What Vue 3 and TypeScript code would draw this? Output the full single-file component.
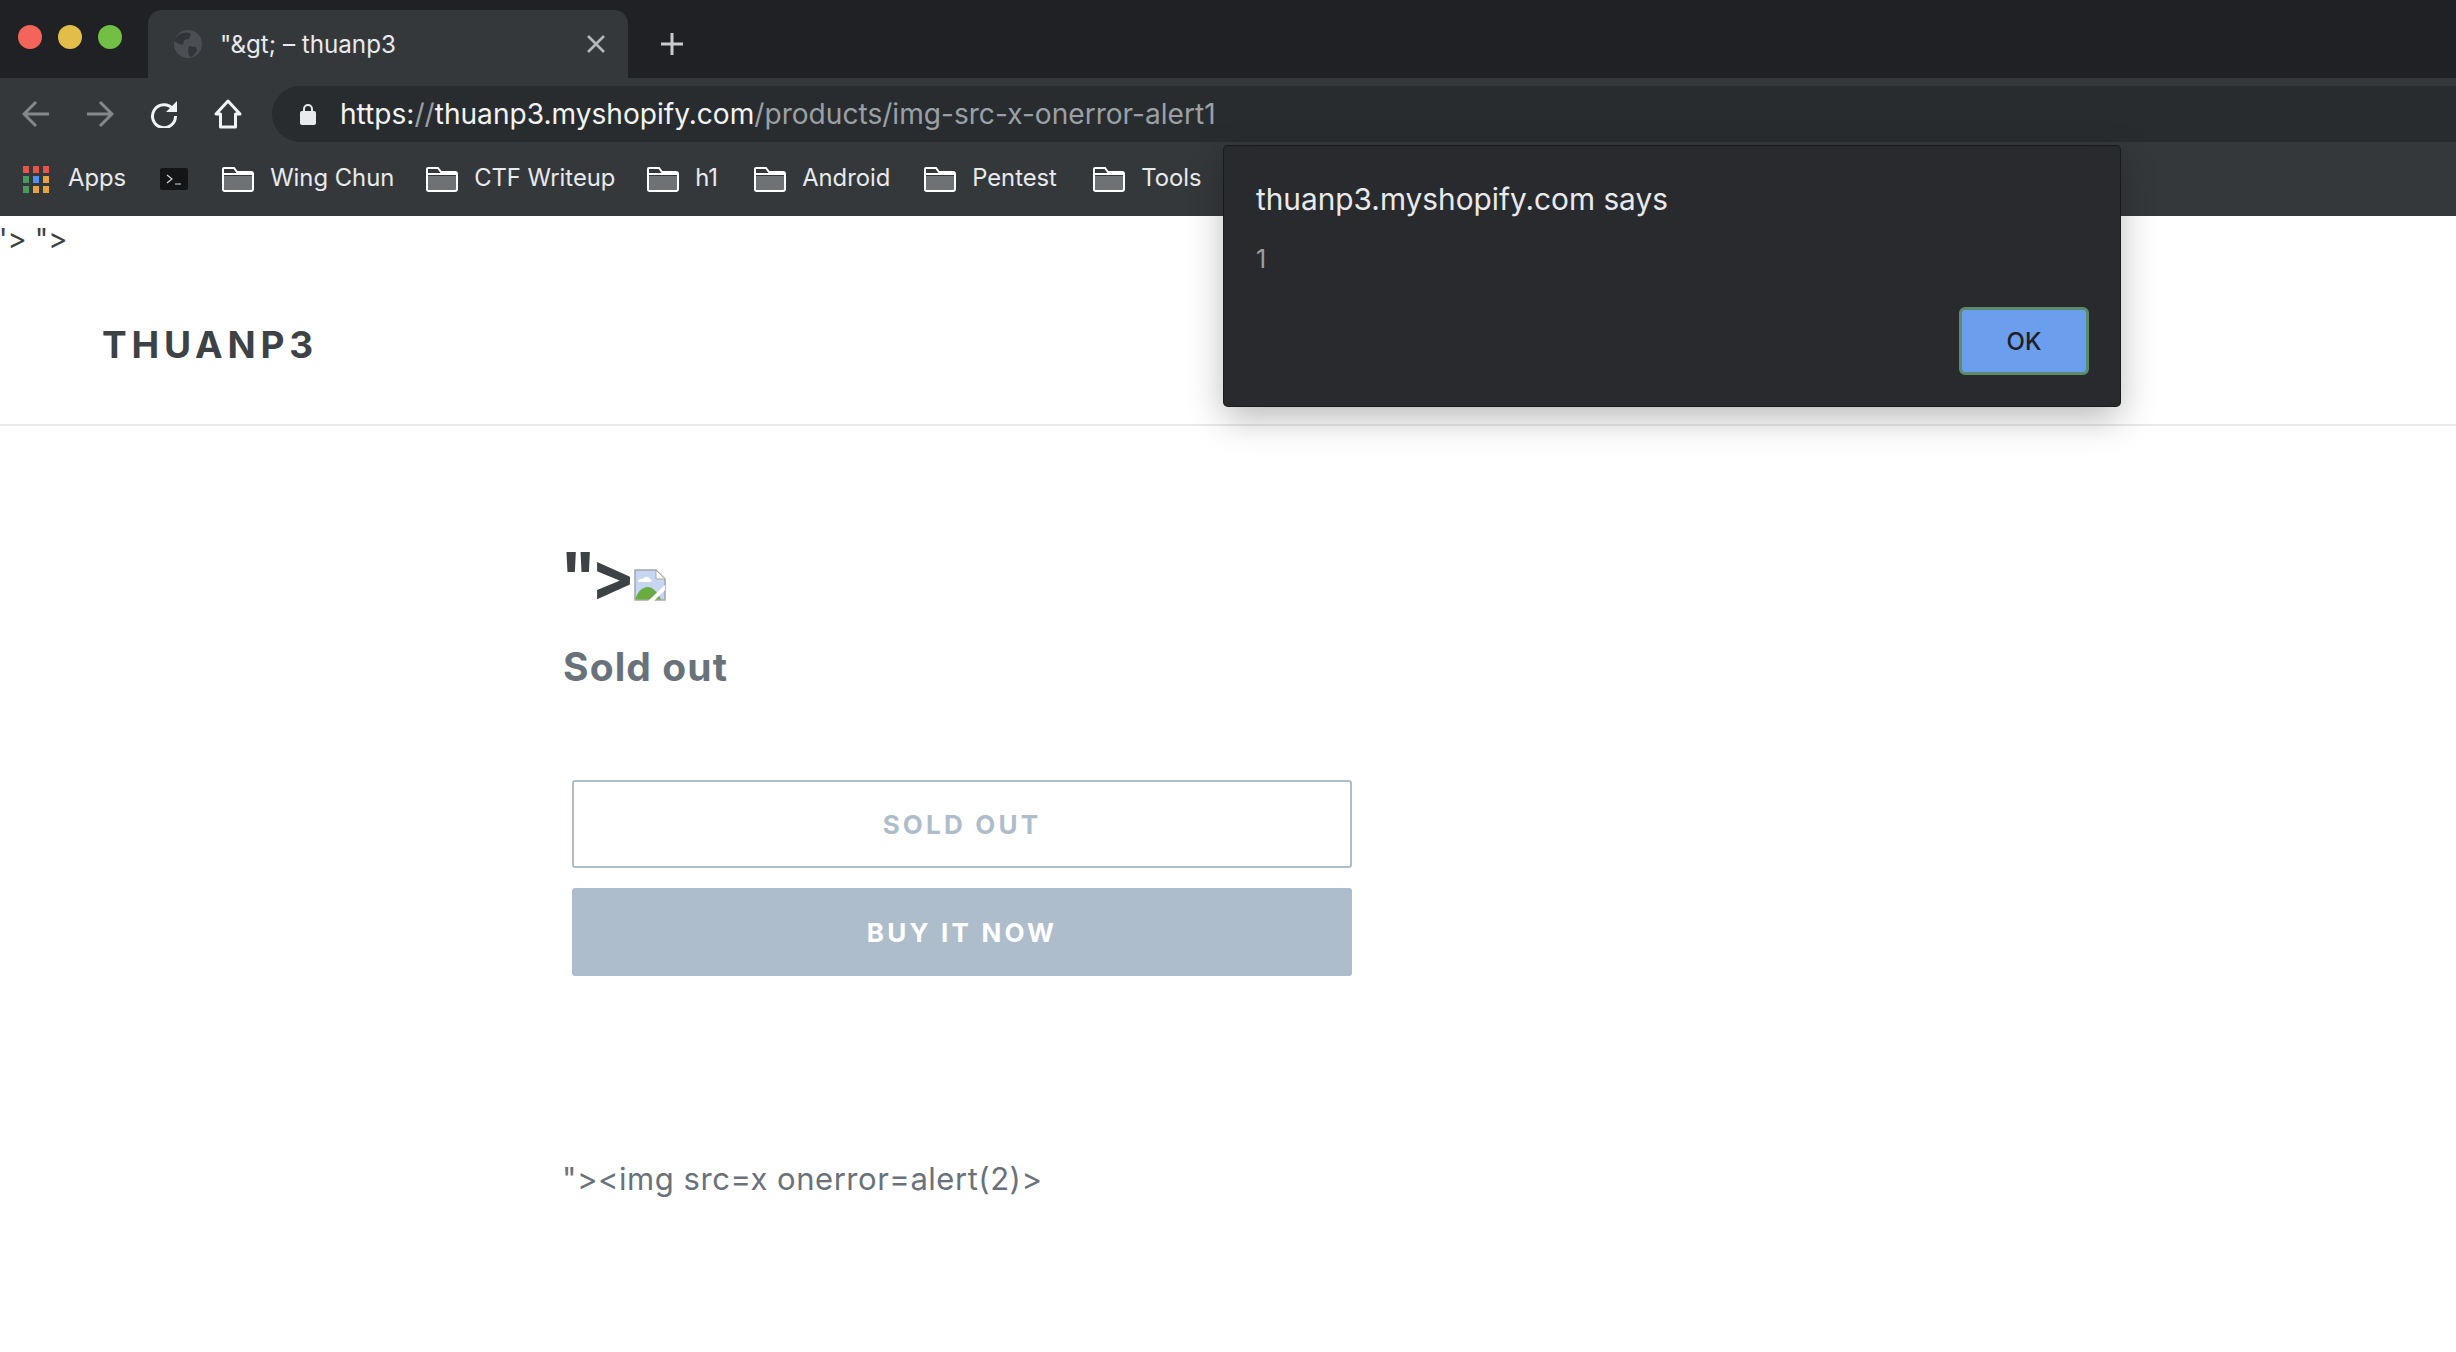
<script setup lang="ts">
const bookmarks: { name: string; width: number }[] = [
  { name: 'Wing Chun', width: 204 },
  { name: 'CTF Writeup', width: 221 },
  { name: 'h1', width: 107 },
  { name: 'Android', width: 170 },
  { name: 'Pentest', width: 169 },
  { name: 'Tools', width: 110 },
]
const appCells: { x: number; y: number; c: string }[] = [
  { x: 0, y: 0, c: '#e5534b' }, { x: 10, y: 0, c: '#e5534b' }, { x: 20, y: 0, c: '#e5534b' },
  { x: 0, y: 10, c: '#4a9a5e' }, { x: 10, y: 10, c: '#4f8ff0' }, { x: 20, y: 10, c: '#e8a33d' },
  { x: 0, y: 20, c: '#4a9a5e' }, { x: 10, y: 20, c: '#e8a33d' }, { x: 20, y: 20, c: '#e8a33d' },
]
</script>

<template>
  <div class="screen">
    <div class="tabstrip">
      <div class="lights">
        <span class="light red"></span>
        <span class="light yellow"></span>
        <span class="light green"></span>
      </div>
      <div class="tab">
        <svg class="globe" width="28" height="28" viewBox="0 0 28 28">
          <circle cx="14" cy="14" r="14" fill="#4b4e52" />
          <path d="M6 4c4-2 8-2 11 0l-2 5-5 1-1 5-4-1-5-3c1-3 3-5 6-7zM15 16l7 1 1 4-5 6-3-1-1-6z" fill="#323538" />
        </svg>
        <span class="tab-title">"&amp;gt; – thuanp3</span>
        <svg class="tab-close" width="20" height="20" viewBox="0 0 20 20">
          <path d="M2 2l16 16M18 2L2 18" stroke="#b4b6b9" stroke-width="2.6" fill="none" />
        </svg>
      </div>
      <svg class="plus" width="24" height="24" viewBox="0 0 24 24">
        <path d="M12 1v22M1 12h22" stroke="#c9cbce" stroke-width="3" fill="none" />
      </svg>
    </div>

    <div class="toolbar">
      <div class="nav">
        <svg width="28" height="28" viewBox="0 0 28 28">
          <path d="M27 14H2M14 2L2 14l12 12" stroke="#85888b" stroke-width="3" fill="none" />
        </svg>
        <svg width="28" height="28" viewBox="0 0 28 28">
          <path d="M1 14h25M14 2l12 12-12 12" stroke="#85888b" stroke-width="3" fill="none" />
        </svg>
        <svg width="28" height="28" viewBox="0 0 28 28">
          <path d="M23 9A11.500 11.500 0 1 0 25.500 16" stroke="#f1f3f4" stroke-width="3" fill="none" />
          <path d="M27 1v11H16z" fill="#f1f3f4" />
        </svg>
        <svg width="28" height="30" viewBox="0 0 28 30">
          <path d="M14 2L2 15h4.500v13h15V15H26z" stroke="#f1f3f4" stroke-width="3" fill="none" stroke-linejoin="round" />
        </svg>
      </div>
      <div class="omnibox">
        <svg class="lock" width="16" height="22" viewBox="0 0 16 22">
          <path d="M4 9V6a4 4 0 0 1 8 0v3" stroke="#e8eaed" stroke-width="2" fill="none" />
          <rect x="0" y="8" width="16" height="14" rx="2" fill="#e8eaed" />
        </svg>
        <span class="url"><span class="host">https:</span><span class="dim">//</span><span class="host">thuanp3.myshopify.com</span><span class="dim">/products/img-src-x-onerror-alert1</span></span>
      </div>
    </div>

    <div class="bookmarks">
      <div class="bm apps">
        <svg width="26" height="27" viewBox="0 0 26 27">
          <rect v-for="(cell, i) in appCells" :key="i" :x="cell.x" :y="cell.y" width="6" height="7" :fill="cell.c" />
        </svg>
        <span>Apps</span>
      </div>
      <svg class="term" width="28" height="22" viewBox="0 0 28 22">
        <rect width="28" height="22" rx="2" fill="#141516" />
        <path d="M7 7l5 4-5 4M15 16h6" stroke="#d5d6d7" stroke-width="1.200" fill="none" />
      </svg>
      <div v-for="item in bookmarks" :key="item.name" class="bm" :style="{ width: item.width + 'px' }">
        <svg width="32" height="25" viewBox="0 0 32 25">
          <path d="M1 9h30v13a2 2 0 0 1-2 2H3a2 2 0 0 1-2-2z" fill="#6f7275" />
          <path d="M1 23V2a1 1 0 0 1 1-1h10l3 4h14a2 2 0 0 1 2 2v15a2 2 0 0 1-2 2H3a2 2 0 0 1-2-1zM1 7h30" stroke="#fff" stroke-width="2" fill="none" />
        </svg>
        <span>{{ item.name }}</span>
      </div>
    </div>

    <div class="page">
      <div class="stray">"&gt; "&gt;</div>
      <header class="site-header"><span class="logo">THUANP3</span></header>
      <main class="product">
        <h1 class="title">
          <span class="title-text">"&gt;</span>
          <svg class="broken" width="32" height="32" viewBox="0 0 32 32">
            <path d="M1 1h21l9 9v21H1z" fill="#c6d6f2" stroke="#a4a6a8" stroke-width="1.500" />
            <path d="M22 1v9h9z" fill="#fff" stroke="#a4a6a8" stroke-width="1" />
            <path d="M4 13c0-3 3-4 5-3 1-3 6-3 7 0 2 0 2 3 0 3z" fill="#fff" />
            <path d="M1.500 30.500C3 23 8 18 14 18c5 0 10 6 13 12.500z" fill="#6aab42" />
            <path d="M14 32L31 16v5L20 32z" fill="#fff" />
          </svg>
        </h1>
        <div class="status">Sold out</div>
        <div class="actions">
          <button class="btn outline" type="button">SOLD OUT</button>
          <button class="btn solid" type="button">BUY IT NOW</button>
        </div>
        <p class="desc">"&gt;&lt;img src=x onerror=alert(2)&gt;</p>
      </main>
    </div>

    <div class="dialog">
      <div class="dialog-title">thuanp3.myshopify.com says</div>
      <div class="dialog-msg">1</div>
      <div class="dialog-actions"><button class="ok" type="button">OK</button></div>
    </div>
  </div>
</template>

<style scoped>
.screen {
  position: relative;
  width: 2456px;
  height: 1352px;
  overflow: hidden;
  background: #fff;
  font-family: Inter, "Liberation Sans", sans-serif;
}
.tabstrip {
  height: 78px;
  background: #202124;
  display: flex;
  align-items: flex-end;
}
.lights {
  display: flex;
  gap: 16px;
  width: 130px;
  padding-left: 18px;
  align-self: flex-start;
  padding-top: 25px;
  flex: none;
}
.light { width: 24px; height: 24px; border-radius: 50%; flex: none; }
.red { background: #f3655c; }
.yellow { background: #e2be49; }
.green { background: #71bf45; }
.tab {
  width: 480px;
  height: 68px;
  background: #35383b;
  border-radius: 14px 14px 0 0;
  display: flex;
  align-items: center;
  padding: 0 22px 0 26px;
  box-sizing: border-box;
}
.globe { flex: none; margin-right: 18px; }
.tab-title { color: #e8eaed; font-size: 24.2px; flex: 1; white-space: nowrap; }
.tab-close { flex: none; }
.plus { margin: 0 0 22px 32px; flex: none; }
.toolbar {
  height: 64px;
  background: #35383b;
  display: flex;
  align-items: flex-start;
  box-sizing: border-box;
  padding-top: 8px;
}
.nav {
  display: flex;
  align-items: center;
  gap: 36px;
  height: 56px;
  padding-left: 22px;
  width: 250px;
  flex: none;
}
.omnibox {
  flex: 1;
  height: 56px;
  margin-right: -40px;
  background: #292c2f;
  border-radius: 28px;
  display: flex;
  align-items: center;
  padding-left: 28px;
}
.lock { flex: none; margin-right: 24px; }
.url { font-size: 28.1px; white-space: nowrap; }
.dim { color: #9aa0a6; }
.host { color: #f1f3f4; }
.bookmarks {
  height: 74px;
  background: #35383b;
  display: flex;
  align-items: center;
  padding-left: 23px;
  box-sizing: border-box;
  color: #e8eaed;
  font-size: 23.8px;
}
.bm { display: flex; align-items: center; gap: 16px; white-space: nowrap; flex: none; }
.bm > span { position: relative; top: -2px; }
.apps { gap: 19px; margin-right: 34px; }
.term { flex: none; margin-right: 34px; }
.page { color: #3d4246; }
.stray { height: 44px; line-height: 46px; font-size: 29px; margin-left: -6px; }
.site-header {
  height: 166px;
  box-sizing: border-box;
  border-bottom: 2px solid #e8e9eb;
  padding: 5px 0 0 102px;
  display: flex;
  align-items: center;
}
.logo { font-size: 37px; font-weight: 700; letter-spacing: 4.8px; }
.product { padding-left: 563px; }
.title {
  margin: 0;
  padding-top: 117px;
  height: 66px;
  display: flex;
  align-items: flex-end;
  font-size: 66px;
  font-weight: 700;
  line-height: 66px;
}
.title-text { letter-spacing: -6px; margin-left: -3px; }
.broken { margin: 0 0 8px 5px; flex: none; }
.status { margin-top: 35px; font-size: 39px; letter-spacing: 1.1px; font-weight: 700; color: #69727b; line-height: 46px; }
.actions {
  margin: 90px 0 0 9px;
  width: 780px;
  display: flex;
  flex-direction: column;
  gap: 20px;
}
.btn {
  height: 88px;
  border-radius: 3px;
  font-family: inherit;
  font-size: 26px;
  font-weight: 700;
  letter-spacing: 3.2px;
  box-sizing: border-box;
  padding: 0;
}
.outline { background: #fff; border: 2px solid #aebdcb; color: #aebdcb; }
.solid { background: #aebdcb; border: none; color: #fff; }
.desc { margin: 181px 0 0 -1px; font-size: 31px; letter-spacing: 0.53px; line-height: 44px; color: #69727b; }
.dialog {
  position: absolute;
  left: 1224px;
  top: 146px;
  width: 896px;
  height: 260px;
  box-sizing: border-box;
  background: #292a2d;
  border-radius: 4px;
  box-shadow: 0 0 0 1px #1a1b1d, 0 12px 36px rgba(0, 0, 0, 0.28);
  padding: 32px 31px 0 32px;
  color: #e8eaed;
}
.dialog-title { font-size: 29.8px; line-height: 43px; }
.dialog-msg { margin-top: 22px; font-size: 25px; line-height: 32px; color: #9aa0a6; }
.dialog-actions { display: flex; justify-content: flex-end; margin-top: 32px; }
.ok {
  width: 130px;
  height: 68px;
  background: #6c9eee;
  border: 3px solid #5e8a6c;
  border-radius: 6px;
  color: #1f2023;
  font-family: inherit;
  font-size: 24px;
  font-weight: 500;
  box-sizing: border-box;
  padding: 0;
}
</style>
